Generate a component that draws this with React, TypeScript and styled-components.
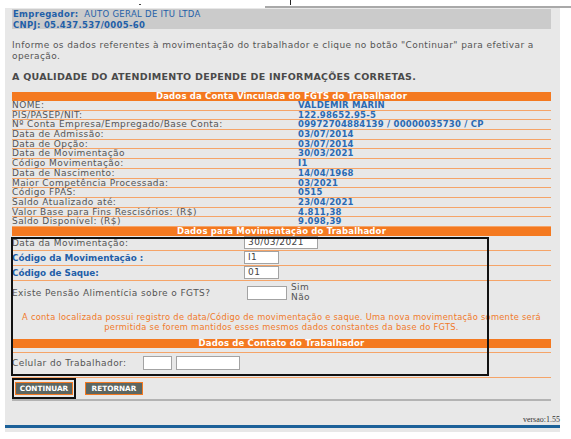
import styled, { createGlobalStyle } from "styled-components";

const GlobalStyle = createGlobalStyle`
  body {
    margin: 0;
    background: #ffffff;
    font-family: "DejaVu Sans", Verdana, sans-serif;
  }
`;

const TopStrip = styled.div`
  display: flex;
  height: 8px;
`;

const TopLeft = styled.div`
  width: 265px;
  padding: 4px 0 0 139px;
  box-sizing: border-box;
`;

const Dot = styled.div`
  width: 2px;
  height: 1px;
  background: #444;
`;

const TopRight = styled.div`
  flex: 1;
  border-bottom: 2px solid #a9a9a9;
  padding-left: 25px;
`;

const Tick = styled.div`
  width: 1px;
  height: 5px;
  background: #222;
`;

const Panel = styled.div`
  margin-left: 5px;
  width: 555px;
  background: #e8e8e8;
  padding: 1px 9px 4px 7px;
  box-sizing: border-box;
`;

const EmployerBox = styled.div`
  background: #cbcbcb;
  height: 20px;
  padding: 0 0 0 1px;
  font-size: 8.5px;
  letter-spacing: 0.3px;
  line-height: 10.5px;
  color: #1f5fa8;
`;

const Strong = styled.span`
  font-weight: bold;
`;

const Intro = styled.p`
  margin: 11px 0 0;
  font-size: 9px;
  letter-spacing: 0.4px;
  line-height: 11px;
  color: #555;
`;

const Warning = styled.p`
  margin: 9px 0 0;
  font-size: 9.5px;
  letter-spacing: 0.26px;
  line-height: 11px;
  font-weight: bold;
  color: #4a4a4a;
`;

const SectionHeader = styled.div<{ $top?: number }>`
  margin-top: ${(p) => p.$top ?? 0}px;
  background: #f47920;
  color: #fff;
  font-weight: bold;
  font-size: 8.5px;
  letter-spacing: 0.17px;
  height: 9px;
  line-height: 9px;
  text-align: center;
  white-space: nowrap;
`;

const DataRow = styled.div`
  display: flex;
  align-items: center;
  height: 9.7px;
  box-sizing: border-box;
  border-bottom: 1px solid #f5a468;
  line-height: 8.7px;
`;

const Label = styled.span<{ $blue?: boolean; $w: number }>`
  flex: 0 0 ${(p) => p.$w}px;
  color: ${(p) => (p.$blue ? "#1f5fa8" : "#555")};
  font-weight: ${(p) => (p.$blue ? "bold" : "normal")};
  font-size: ${(p) => (p.$blue ? "8.8px" : "9px")};
  letter-spacing: ${(p) => (p.$blue ? "0" : "0.42px")};
  white-space: nowrap;
`;

const Value = styled.span`
  color: #2a6ab3;
  font-weight: bold;
  font-size: 8.5px;
  letter-spacing: 0.22px;
  white-space: nowrap;
`;

const MoveSection = styled.div`
  position: relative;
`;

const Highlight = styled.div`
  position: absolute;
  top: 1px;
  left: -1px;
  width: 478px;
  height: 139px;
  border: 2.5px solid #111;
  box-sizing: border-box;
  pointer-events: none;
`;

const FormRow = styled.div<{ $h: number; $line?: boolean }>`
  display: flex;
  align-items: center;
  height: ${(p) => p.$h}px;
  box-sizing: border-box;
  border-bottom: ${(p) => (p.$line ? "1px solid #f5a468" : "none")};
  line-height: 10px;
`;

const InputBox = styled.div<{ $w: number; $h?: number }>`
  flex: none;
  width: ${(p) => p.$w}px;
  height: ${(p) => p.$h ?? 13}px;
  box-sizing: border-box;
  border: 1px solid #a3a3a3;
  background: #fff;
  padding: 0 3px;
  font-size: 9px;
  letter-spacing: 0.4px;
  line-height: 11px;
  color: #444;
`;

const Inline = styled.div<{ $pad?: number }>`
  display: flex;
  align-items: center;
  gap: 4px;
  padding-left: ${(p) => p.$pad ?? 0}px;
`;

const Choices = styled.div`
  display: flex;
  flex-direction: column;
  font-size: 9px;
  letter-spacing: 0.4px;
  line-height: 9.5px;
  color: #555;
`;

const Message = styled.p`
  margin: 0;
  padding: 7px 0 7px;
  text-align: center;
  font-size: 8.3px;
  letter-spacing: 0.27px;
  line-height: 10px;
  color: #f07a2a;
  white-space: nowrap;
`;

const Spacer = styled.div`
  height: 5px;
  box-sizing: border-box;
  border-bottom: 1px solid #f5a468;
`;

const ButtonBar = styled.div`
  margin-top: 4px;
  border-top: 1px solid #f5a468;
  border-bottom: 2px solid #b3b3b3;
  display: flex;
  align-items: center;
  gap: 9px;
`;

const Frame = styled.div`
  border: 2px solid #111;
  padding: 2px 1px 2px 1px;
  display: flex;
`;

const Button = styled.button`
  width: 58px;
  height: 13px;
  padding: 0;
  border: 1px solid #f47920;
  background: #5c6661;
  color: #fff;
  font-family: "DejaVu Sans", Verdana, sans-serif;
  font-weight: bold;
  font-size: 7.3px;
  line-height: 11px;
`;

const Footer = styled.div`
  margin: 0 -9px 0 -7px;
`;

const Version = styled.div`
  text-align: right;
  padding-top: 15px;
  height: 24px;
  box-sizing: border-box;
  font-family: "Liberation Serif", serif;
  font-size: 8px;
  line-height: 8px;
  color: #333;
`;

const BlueRule = styled.div`
  height: 3px;
  background: #1c6199;
`;

const accountRows: [string, string][] = [
  ["NOME:", "VALDEMIR MARIN"],
  ["PIS/PASEP/NIT:", "122.98652.95-5"],
  ["Nº Conta Empresa/Empregado/Base Conta:", "09972704884139 / 00000035730 / CP"],
  ["Data de Admissão:", "03/07/2014"],
  ["Data de Opção:", "03/07/2014"],
  ["Data de Movimentação", "30/03/2021"],
  ["Código Movimentação:", "I1"],
  ["Data de Nascimento:", "14/04/1968"],
  ["Maior Competência Processada:", "03/2021"],
  ["Código FPAS:", "0515"],
  ["Saldo Atualizado até:", "23/04/2021"],
  ["Valor Base para Fins Rescisórios: (R$)", "4.811,38"],
  ["Saldo Disponível: (R$)", "9.098,39"],
];

export default function App() {
  return (
    <>
      <GlobalStyle />
      <TopStrip>
        <TopLeft>
          <Dot />
        </TopLeft>
        <TopRight>
          <Tick />
        </TopRight>
      </TopStrip>
      <Panel>
        <EmployerBox>
          <div>
            <Strong>Empregador:</Strong>&nbsp; AUTO GERAL DE ITU LTDA
          </div>
          <div>
            <Strong>CNPJ: 05.437.537/0005-60</Strong>
          </div>
        </EmployerBox>

        <Intro>
          Informe os dados referentes à movimentação do trabalhador e clique no botão "Continuar" para efetivar a
          operação.
        </Intro>
        <Warning>A QUALIDADE DO ATENDIMENTO DEPENDE DE INFORMAÇÕES CORRETAS.</Warning>

        <SectionHeader $top={10}>Dados da Conta Vinculada do FGTS do Trabalhador</SectionHeader>
        {accountRows.map(([label, value]) => (
          <DataRow key={label}>
            <Label $w={286}>{label}</Label>
            <Value>{value}</Value>
          </DataRow>
        ))}

        <SectionHeader>Dados para Movimentação do Trabalhador</SectionHeader>
        <MoveSection>
          <FormRow $h={15} $line>
            <Label $w={232}>Data da Movimentação:</Label>
            <InputBox $w={74}>30/03/2021</InputBox>
          </FormRow>
          <FormRow $h={15} $line>
            <Label $w={232} $blue>
              Código da Movimentação :
            </Label>
            <InputBox $w={35}>I1</InputBox>
          </FormRow>
          <FormRow $h={15} $line>
            <Label $w={232} $blue>
              Código de Saque:
            </Label>
            <InputBox $w={35}>01</InputBox>
          </FormRow>
          <FormRow $h={24}>
            <Label $w={232}>Existe Pensão Alimentícia sobre o FGTS?</Label>
            <Inline $pad={3}>
              <InputBox $w={40} $h={14} />
              <Choices>
                <span>Sim</span>
                <span>Não</span>
              </Choices>
            </Inline>
          </FormRow>
          <Message>
            A conta localizada possui registro de data/Código de movimentação e saque. Uma nova movimentação somente será
            <br />
            permitida se forem mantidos esses mesmos dados constantes da base do FGTS.
          </Message>

          <SectionHeader>Dados de Contato do Trabalhador</SectionHeader>
          <Spacer />
          <FormRow $h={20}>
            <Label $w={131}>Celular do Trabalhador:</Label>
            <Inline>
              <InputBox $w={29} $h={14} />
              <InputBox $w={64} $h={14} />
            </Inline>
          </FormRow>
          <Highlight />
        </MoveSection>

        <ButtonBar>
          <Frame>
            <Button>CONTINUAR</Button>
          </Frame>
          <Button>RETORNAR</Button>
        </ButtonBar>

        <Footer>
          <Version>versao:1.55</Version>
          <BlueRule />
        </Footer>
      </Panel>
    </>
  );
}
